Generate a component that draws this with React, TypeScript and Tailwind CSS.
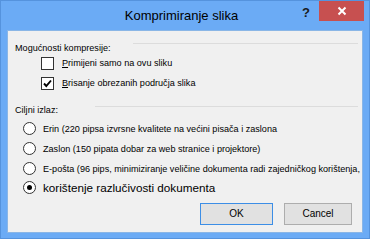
import React from "react";

function Checkbox({ checked }: { checked?: boolean }) {
  return (
    <div className="w-[13px] h-[13px] border border-[#333333] bg-white flex items-center justify-center shrink-0">
      {checked && (
        <svg width="11" height="11" viewBox="0 0 11 11">
          <path d="M2 5.5 L4.3 8 L9 2.5" fill="none" stroke="#000" strokeWidth="1.9" />
        </svg>
      )}
    </div>
  );
}

function Radio({ checked }: { checked?: boolean }) {
  return (
    <div className="w-[13px] h-[13px] rounded-full border border-[#333333] bg-white flex items-center justify-center shrink-0">
      {checked && <div className="w-[5px] h-[5px] rounded-full bg-black" />}
    </div>
  );
}

export default function App() {
  return (
    <div className="w-[371px] h-[240px] bg-white font-['Liberation_Sans',Arial,sans-serif] text-black">
      <div className="relative w-[370px] h-[239px] bg-[#6babf5] border border-[#5593dd] flex flex-col">
        {/* Title bar */}
        <div className="h-[29px] flex justify-center pt-[7px] pr-[7px]">
          <span className="text-[13px] leading-[15px] text-black">Komprimiranje slika</span>
        </div>
        <span className="absolute left-[301px] top-[4px] text-[13px] leading-[15px] font-bold text-[#1a1a1a]">?</span>
        <div className="absolute top-0 right-[5px] w-[45px] h-[20px] bg-[#c75050] flex items-center justify-center">
          <svg width="10" height="10" viewBox="0 0 10 10">
            <path d="M1.5 1.5 L8.5 8.5 M8.5 1.5 L1.5 8.5" stroke="#fff" strokeWidth="2" />
          </svg>
        </div>

        {/* Content */}
        <div className="flex-1 mx-[6px] mb-[5px] bg-[#f0f0f0] border border-[#8ab6e6] flex flex-col pl-[7px] pr-[4px] text-[9.1px]">
          <div className="mt-[11px] h-[12px] flex items-start">
            <span className="w-[118px] leading-[12px]">Mogućnosti kompresije:</span>
            <div className="flex-1 h-px bg-[#dcdcdc] mt-[1px]" />
          </div>

          <div className="mt-[3px] h-[13px] flex items-center gap-[8px] ml-[26px]">
            <Checkbox />
            <span className="leading-[13px]">
              <span className="underline">P</span>rimijeni samo na ovu sliku
            </span>
          </div>
          <div className="mt-[7px] h-[13px] flex items-center gap-[8px] ml-[26px]">
            <Checkbox checked />
            <span className="leading-[13px]">
              <span className="underline">B</span>risanje obrezanih područja slika
            </span>
          </div>

          <div className="mt-[14px] h-[12px] flex items-start">
            <span className="w-[80px] leading-[12px]">Ciljni izlaz:</span>
            <div className="flex-1 h-px bg-[#dcdcdc] mt-[2px]" />
          </div>

          <div className="mt-[2px] h-[20px] flex items-center gap-[7px] ml-[8px]">
            <Radio />
            <span className="leading-[13px] pt-[2px]">Erin (220 pipsa izvrsne kvalitete na većini pisača i zaslona</span>
          </div>
          <div className="h-[20px] flex items-center gap-[7px] ml-[8px]">
            <Radio />
            <span className="leading-[13px] pt-[2px]">Zaslon (150 pipata dobar za web stranice i projektore)</span>
          </div>
          <div className="h-[20px] flex items-center gap-[7px] ml-[8px] whitespace-nowrap">
            <Radio />
            <span className="leading-[13px] pt-[2px]">E-pošta (96 pips, minimiziranje veličine dokumenta radi zajedničkog korištenja,</span>
          </div>
          <div className="h-[18px] flex items-center gap-[7px] ml-[8px]">
            <Radio checked />
            <span className="leading-[15px] text-[11.7px]">korištenje razlučivosti dokumenta</span>
          </div>

          <div className="mt-[7px] flex justify-end gap-[11px] mr-[6px]">
            <button className="w-[73px] h-[22px] bg-[#e1e1e1] border border-[#3c8ee6] text-[10px] leading-[12px] text-black">
              OK
            </button>
            <button className="w-[68px] h-[22px] bg-[#e1e1e1] border border-[#adadad] text-[10px] leading-[12px] text-black">
              Cancel
            </button>
          </div>
        </div>
      </div>
    </div>
  );
}
